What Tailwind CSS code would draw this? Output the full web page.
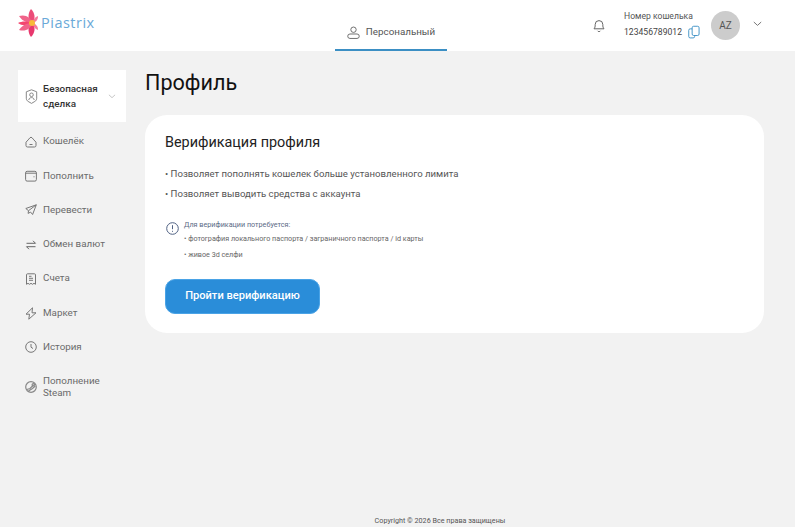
<!DOCTYPE html>
<html lang="ru">
<head>
    <meta charset="UTF-8">
    <meta name="viewport" content="width=device-width, initial-scale=1.0">
    <title>Piastrix</title>
    <script src="https://cdn.jsdelivr.net/npm/@tailwindcss/browser@4"></script>
</head>
<body class="bg-[#f2f2f2] font-['Roboto',sans-serif] h-[527px] overflow-hidden flex flex-col">
    <!-- header -->
    <header class="h-[51px] bg-white flex items-stretch shrink-0">
        <div class="w-[335px] pl-[18px] flex items-center gap-[3px] pb-[5px]">
            <svg width="20" height="28" viewBox="0 0 20 28">
                <path d="M14 14C9 10 10 4 13 0C17 4 18 10 14 14z" fill="#ec4b78"/>
                <path d="M14 14C9 18 10 24 13 28C17 24 18 18 14 14z" fill="#e8386e"/>
                <path d="M14 14C10 14 5 13 1 7C7 5 13 8 14 14z" fill="#f0648a"/>
                <path d="M14 14C9 12 4 12 0 14C4 17 9 17 14 14z" fill="#f4466f"/>
                <path d="M14 14C10 14 5 15 1 21C7 23 13 20 14 14z" fill="#f0648a"/>
                <path d="M14 14C15 11 17 8 20 7C20 11 18 13 14 14z" fill="#f47a9b"/>
                <path d="M14 14C15 17 17 20 20 21C20 17 18 15 14 14z" fill="#f47a9b"/>
                <circle cx="14" cy="14" r="3" fill="#f8b93a"/>
            </svg>
            <span class="font-['Open_Sans',sans-serif] text-[14.500px] tracking-[0.500px] text-[#6aa9d8] leading-none">Piastrix</span>
        </div>
        <div class="w-[112px] border-b-2 border-[#3b8fc4] flex items-center justify-center gap-[6px] pt-[15px] text-[9.800px] text-[#555]">
            <svg width="13" height="13" viewBox="0 0 14 14" fill="none" stroke="#666" stroke-width="1">
                <circle cx="7" cy="4" r="2.900"/>
                <path d="M3.200 8.600h7.600a2.400 2.400 0 0 1 0 4.800H3.200a2.400 2.400 0 0 1 0-4.800z"/>
            </svg>
            <span>Персональный</span>
        </div>
        <div class="flex-1 flex items-center justify-end pr-[33px]">
            <svg width="14" height="15" viewBox="0 0 14 15" fill="none" stroke="#666" stroke-width="1" class="mr-[18px]">
                <path d="M2 10.800c1-1.200 1.200-2 1.200-4.400a3.800 3.800 0 0 1 7.600 0c0 2.400.2 3.200 1.200 4.400z" stroke-linejoin="round"/>
                <path d="M5.600 12.800a1.600 1.600 0 0 0 2.800 0"/>
            </svg>
            <div class="flex flex-col mr-[11px] -mt-[2px] text-[#555] text-[8.600px]">
                <span class="leading-[12px] mb-[3px]">Номер кошелька</span>
                <div class="flex items-center gap-[6px] leading-[13px]">
                    <span class="text-[#444]">123456789012</span>
                    <svg width="12" height="14" viewBox="0 0 13 14" fill="none" stroke="#3b8fc4" stroke-width="1">
                        <rect x="4.500" y="0.800" width="7.500" height="10" rx="1.600"/>
                        <path d="M4.500 3.600H2.400A1.600 1.600 0 0 0 .8 5.200v6.600a1.600 1.600 0 0 0 1.600 1.600h3.200A1.600 1.600 0 0 0 7.200 11.800v-1"/>
                    </svg>
                </div>
            </div>
            <div class="w-[29px] h-[29px] rounded-full bg-[#cccccc] flex items-center justify-center text-[10px] text-[#555] mr-[13px]">AZ</div>
            <svg width="9" height="6" viewBox="0 0 9 6" fill="none" stroke="#777" stroke-width="1" class="-mt-[3px]"><path d="M.8 1l3.700 3.400L8.200 1"/></svg>
        </div>
    </header>

    <div class="flex flex-1 min-h-0">
        <!-- sidebar -->
        <aside class="w-[145px] shrink-0 pl-[18px] pt-[19px]">
            <div class="w-[108px] h-[52px] bg-white flex items-center pl-[7px]">
                <svg width="13" height="15" viewBox="0 0 13 15" fill="none" stroke="#888" stroke-width="1" class="shrink-0">
                    <path d="M6.500.8l5.200 2v6.400c0 1.600-.6 2.400-1.800 3.200l-3.400 2-3.400-2C2 11.600 1.300 10.800 1.300 9.200V2.800z"/>
                    <circle cx="6.500" cy="5.800" r="1.800"/>
                    <path d="M3.800 11c.2-1.600 1.200-2.400 2.700-2.400s2.500.8 2.700 2.400"/>
                </svg>
                <div class="ml-[5px] w-[60px] text-[9.900px] leading-[15px] font-medium text-[#333]">Безопасная сделка</div>
                <svg width="8" height="5" viewBox="0 0 9 6" fill="none" stroke="#bbb" stroke-width="1" class="ml-[5px]"><path d="M.8 1l3.700 3.400L8.200 1"/></svg>
            </div>
            <nav class="mt-[2.500px] flex flex-col text-[9.800px] text-[#6b6b6b] pl-[7px]">
                <a class="h-[34.300px] flex items-center gap-[6px]">
                    <svg width="12" height="12" viewBox="0 0 12 12" fill="none" stroke="#777" stroke-width="1"><path d="M1 6.200C2.500 5 3.800 2.800 5 1.700a1.500 1.500 0 0 1 2 0C8.200 2.800 9.500 5 11 6.200v3.300a1.500 1.500 0 0 1-1.500 1.500h-7A1.500 1.500 0 0 1 1 9.500z"/><path d="M4.500 8.500h3"/></svg>
                    <span>Кошелёк</span>
                </a>
                <a class="h-[34.300px] flex items-center gap-[6px]">
                    <svg width="12" height="12" viewBox="0 0 12 12" fill="none" stroke="#777" stroke-width="1"><rect x=".6" y="1.300" width="10.800" height="9.800" rx="1.500"/><path d="M.6 3.200h10.800M8.500 6.800h1"/></svg>
                    <span>Пополнить</span>
                </a>
                <a class="h-[34.300px] flex items-center gap-[6px]">
                    <svg width="12" height="12" viewBox="0 0 12 12" fill="none" stroke="#777" stroke-width="1" stroke-linejoin="round"><path d="M11.300 .8 .8 4.500l2.700 2.200-.4 2.700 2.500-1.300 2 2.400z"/><path d="M3.500 6.700 11.300 .8"/></svg>
                    <span>Перевести</span>
                </a>
                <a class="h-[34.300px] flex items-center gap-[6px]">
                    <svg width="12" height="12" viewBox="0 0 12 12" fill="none" stroke="#666" stroke-width="1"><path d="M1.500 4.300h9M8 1.800l2.500 2.500M10.500 7.700h-9M4 10.200 1.500 7.700"/></svg>
                    <span>Обмен валют</span>
                </a>
                <a class="h-[34.300px] flex items-center gap-[6px]">
                    <svg width="12" height="12" viewBox="0 0 12 12" fill="none" stroke="#777" stroke-width="1"><path d="M1.500 1.800a1 1 0 0 1 1-1h7a1 1 0 0 1 1 1v9.500l-1.500-1-1.500 1-1.500-1-1.500 1-1.500-1-1.500 1z" stroke-linejoin="round"/><path d="M4 3.300h2.500M4 5.300h4M4 7.300h4"/></svg>
                    <span>Счета</span>
                </a>
                <a class="h-[34.300px] flex items-center gap-[6px]">
                    <svg width="12" height="13" viewBox="0 0 12 13" fill="none" stroke="#777" stroke-width="1" stroke-linejoin="round"><path d="M7.500 .8 1 7.200h3.500L3.800 12.200 11 5.800H7z"/></svg>
                    <span>Маркет</span>
                </a>
                <a class="h-[34.300px] flex items-center gap-[6px]">
                    <svg width="12" height="12" viewBox="0 0 12 12" fill="none" stroke="#777" stroke-width="1"><circle cx="6" cy="6" r="5.300"/><path d="M6 3v3.200l2 1.300"/></svg>
                    <span>История</span>
                </a>
                <a class="h-[44px] flex items-center gap-[6px] leading-[12px]">
                    <svg width="12" height="12" viewBox="0 0 12 12" fill="none" stroke="#888" stroke-width="1.200" class="shrink-0"><circle cx="6" cy="6" r="5.300"/><path d="M1.800 8.500 5 7.500 8.500 4M3.500 10 7.500 7.500 10.300 5"/><circle cx="8.300" cy="3.800" r="1.200"/></svg>
                    <span class="w-[70px]">Пополнение Steam</span>
                </a>
            </nav>
        </aside>

        <!-- content -->
        <div class="flex-1 flex flex-col pr-[31px] min-w-0">
            <main class="flex-1">
                <h1 class="text-[21.600px] leading-[28px] text-[#111] mt-[18px] mb-[18px]">Профиль</h1>
                <section class="h-[218px] bg-white rounded-[22px] px-[20px] pt-[18px]">
                    <h2 class="text-[14.400px] leading-[19px] text-[#222]">Верификация профиля</h2>
                    <ul class="mt-[15px] text-[9.600px] text-[#555] flex flex-col gap-[5.500px] leading-[14px]">
                        <li>• Позволяет пополнять кошелек больше установленного лимита</li>
                        <li>• Позволяет выводить средства с аккаунта</li>
                    </ul>
                    <div class="mt-[18.500px] flex items-start">
                        <svg width="13" height="13" viewBox="0 0 13 13" fill="none" stroke="#4f6183" stroke-width="1" class="mt-[3px] shrink-0 ml-px">
                            <circle cx="6.500" cy="6.500" r="5.800"/>
                            <path d="M6.500 3.200v4M6.500 8.800v1"/>
                        </svg>
                        <div class="ml-[5px] text-[7.200px] leading-[10px]">
                            <p class="mt-[1px] text-[#5a6a85]">Для верификации потребуется:</p>
                            <p class="mt-[4px] text-[#666]">• фотография локального паспорта / заграничного паспорта / id карты</p>
                            <p class="mt-[6px] text-[#666]">• живое 3d селфи</p>
                        </div>
                    </div>
                    <button class="mt-[19px] w-[155px] h-[34.500px] rounded-[10px] bg-[#2a8dd9] border border-[#4aa3e6] text-white text-[11.100px] font-medium">Пройти верификацию</button>
                </section>
            </main>
            <footer class="h-[11px] text-[7.200px] leading-[10px] text-[#555] text-center pr-[29px]">Copyright © 2026 Все права защищены</footer>
        </div>
    </div>
</body>
</html>
